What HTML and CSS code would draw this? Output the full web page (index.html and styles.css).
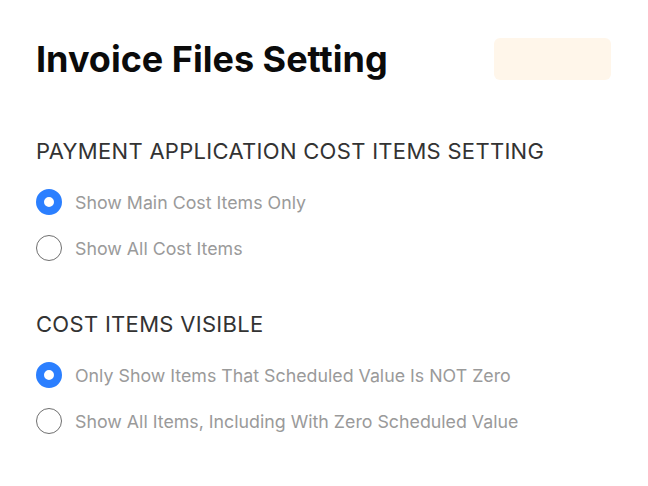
FILE: index.html
```html
<!DOCTYPE html>
<html lang="en">
  <head>
    <meta charset="UTF-8" />
    <meta name="viewport" content="width=device-width, initial-scale=1.0" />
    <title>Invoice Files Setting</title>
    <link rel="stylesheet" href="styles.css">
  </head>
  <body>
    <div class="panel">
      <!-- Header -->
      <div class="header">
        <h1>Invoice Files Setting</h1>
        <div class="badge"></div>
      </div>

      <!-- Payment application cost items -->
      <div class="section">
        <h2>PAYMENT APPLICATION COST ITEMS SETTING</h2>
        <label class="option">
          <input type="radio" name="cost-items" checked />
          <span class="dot"></span>
          <span>Show Main Cost Items Only</span>
        </label>
        <label class="option">
          <input type="radio" name="cost-items" />
          <span class="dot"></span>
          <span>Show All Cost Items</span>
        </label>
      </div>

      <!-- Visibility -->
      <div class="section">
        <h2>COST ITEMS VISIBLE</h2>
        <label class="option">
          <input type="radio" name="visible" checked />
          <span class="dot"></span>
          <span>Only Show Items That Scheduled Value Is NOT Zero</span>
        </label>
        <label class="option">
          <input type="radio" name="visible" />
          <span class="dot"></span>
          <span>Show All Items, Including With Zero Scheduled Value</span>
        </label>
      </div>
    </div>
  </body>
</html>
```

FILE: styles.css
```css
:root {
  --primary: #2b7fff;
  --title: #0b0b0b;
  --heading: #333333;
  --muted: #9a9a9a;
  --ring: #6f6f6f;
  --badge: #fff6ea;
}

* {
  margin: 0;
  padding: 0;
  box-sizing: border-box;
}

body {
  background: #ffffff;
  font-family: Inter, "Open Sans", sans-serif;
}

.panel {
  padding: 38px 36px 0 36px;
}

.header {
  display: flex;
  align-items: center;
  justify-content: space-between;
  width: 575px;
}

h1 {
  font-size: 36px;
  font-weight: 700;
  color: var(--title);
  line-height: 42px;
}

.badge {
  width: 117px;
  height: 42px;
  background: var(--badge);
  border-radius: 6px;
}

.section {
  display: flex;
  flex-direction: column;
  gap: 20px;
  margin-top: 58px;
}

.section + .section {
  margin-top: 50px;
}

h2 {
  font-size: 22px;
  font-weight: 400;
  color: var(--heading);
  line-height: 26px;
  letter-spacing: 0.3px;
  margin-bottom: 5px;
}

.option {
  display: flex;
  align-items: center;
  gap: 13px;
  height: 26px;
  font-size: 17.8px;
  color: var(--muted);
  cursor: pointer;
}

.option input {
  display: none;
}

.dot {
  width: 26px;
  height: 26px;
  border-radius: 50%;
  border: 1.5px solid var(--ring);
  flex-shrink: 0;
}

.option input:checked + .dot {
  border: 8px solid var(--primary);
  background: #ffffff;
}
```
